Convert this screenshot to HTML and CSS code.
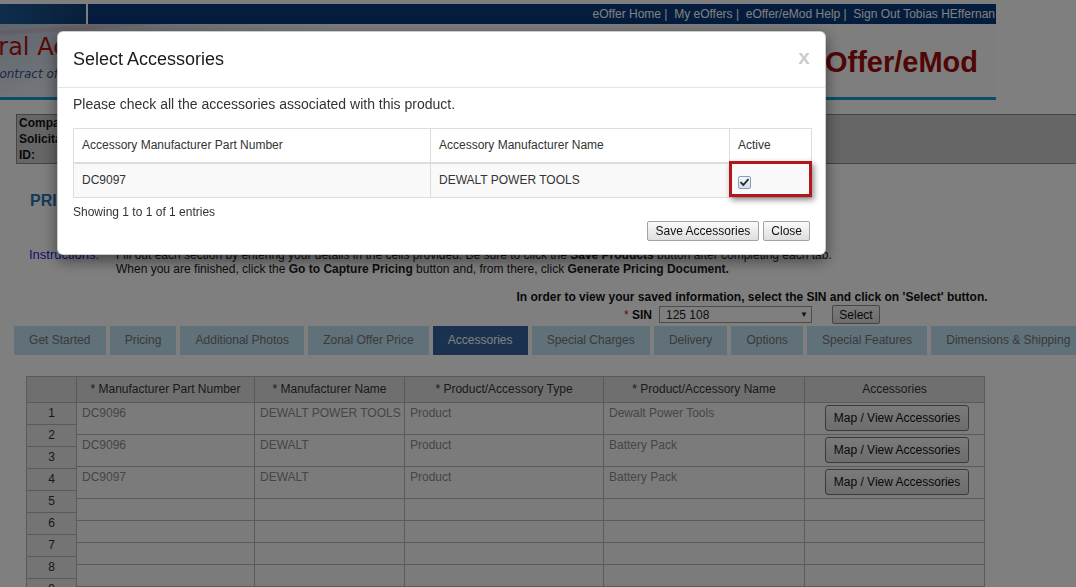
FILE: index.html
```html
<!DOCTYPE html>
<html lang="en">
<head>
<meta charset="utf-8">
<title>eOffer/eMod - Accessories</title>
<link rel="stylesheet" href="styles.css">
</head>
<body>
<div class="page">
  <div class="topbar">
    <div class="topbar-left"></div>
    <div class="topbar-links">eOffer Home |&nbsp; My eOffers |&nbsp; eOffer/eMod Help |&nbsp; Sign Out Tobias HEffernan</div>
  </div>
  <div class="masthead">
    <div class="brand">
      <div class="brand-name">Federal Acquisition Service</div>
      <div class="brand-tag">Contract offer and modification</div>
    </div>
    <div class="app-name">eOffer/eMod</div>
  </div>

  <div class="infobar">
    <div class="info-labels">Company:<br>Solicitation<br>ID:</div>
  </div>

  <h1 class="section-title">PRICING</h1>

  <div class="instructions">
    <div class="instr-label">Instructions:</div>
    <div class="instr-text">Fill out each section by entering your details in the cells provided. Be sure to click the <b>Save Products</b> button after completing each tab.<br>When you are finished, click the <b>Go to Capture Pricing</b> button and, from there, click <b>Generate Pricing Document.</b></div>
  </div>

  <div class="sin-wrap">
    <div class="sin-panel">
      <div class="sin-note">In order to view your saved information, select the SIN and click on 'Select' button.</div>
      <div class="sin-row">
        <span class="sin-label"><span class="req">*</span> SIN</span>
        <span class="sin-select"><span>125 108</span><span class="sin-arrow">&#9660;</span></span>
        <button class="sin-btn">Select</button>
      </div>
    </div>
  </div>

  <div class="tabs">
    <div class="tab">Get Started</div>
    <div class="tab">Pricing</div>
    <div class="tab">Additional Photos</div>
    <div class="tab">Zonal Offer Price</div>
    <div class="tab active">Accessories</div>
    <div class="tab">Special Charges</div>
    <div class="tab">Delivery</div>
    <div class="tab">Options</div>
    <div class="tab">Special Features</div>
    <div class="tab">Dimensions &amp; Shipping</div>
  </div>

  <div class="grid">
    <div class="rownums">
      <div class="rn rn-head"></div>
      <div class="rn">1</div>
      <div class="rn">2</div>
      <div class="rn">3</div>
      <div class="rn">4</div>
      <div class="rn">5</div>
      <div class="rn">6</div>
      <div class="rn">7</div>
      <div class="rn">8</div>
      <div class="rn">9</div>
      <div class="rn">10</div>
    </div>
    <div class="data">
      <div class="drow dhead">
        <div class="c c1">* Manufacturer Part Number</div>
        <div class="c c2">* Manufacturer Name</div>
        <div class="c c3">* Product/Accessory Type</div>
        <div class="c c4">* Product/Accessory Name</div>
        <div class="c c5">Accessories</div>
      </div>
      <div class="drow tall">
        <div class="c c1">DC9096</div>
        <div class="c c2">DEWALT POWER TOOLS</div>
        <div class="c c3">Product</div>
        <div class="c c4">Dewalt Power Tools</div>
        <div class="c c5 btn-cell"><button class="map-btn">Map / View Accessories</button></div>
      </div>
      <div class="drow tall">
        <div class="c c1">DC9096</div>
        <div class="c c2">DEWALT</div>
        <div class="c c3">Product</div>
        <div class="c c4">Battery Pack</div>
        <div class="c c5 btn-cell"><button class="map-btn">Map / View Accessories</button></div>
      </div>
      <div class="drow tall">
        <div class="c c1">DC9097</div>
        <div class="c c2">DEWALT</div>
        <div class="c c3">Product</div>
        <div class="c c4">Battery Pack</div>
        <div class="c c5 btn-cell"><button class="map-btn">Map / View Accessories</button></div>
      </div>
      <div class="drow"><div class="c c1"></div><div class="c c2"></div><div class="c c3"></div><div class="c c4"></div><div class="c c5"></div></div>
      <div class="drow"><div class="c c1"></div><div class="c c2"></div><div class="c c3"></div><div class="c c4"></div><div class="c c5"></div></div>
      <div class="drow"><div class="c c1"></div><div class="c c2"></div><div class="c c3"></div><div class="c c4"></div><div class="c c5"></div></div>
      <div class="drow"><div class="c c1"></div><div class="c c2"></div><div class="c c3"></div><div class="c c4"></div><div class="c c5"></div></div>
      <div class="drow"><div class="c c1"></div><div class="c c2"></div><div class="c c3"></div><div class="c c4"></div><div class="c c5"></div></div>
    </div>
  </div>
</div>

<div class="backdrop"></div>

<div class="modal">
  <div class="modal-header">
    <h4 class="modal-title">Select Accessories</h4>
    <span class="modal-close">x</span>
  </div>
  <div class="modal-body">
    <p class="modal-intro">Please check all the accessories associated with this product.</p>
    <div class="acc-wrap">
      <table class="acc-table">
        <colgroup><col class="w1"><col class="w2"><col class="w3"></colgroup>
        <thead>
          <tr><th>Accessory Manufacturer Part Number</th><th>Accessory Manufacturer Name</th><th>Active</th></tr>
        </thead>
        <tbody>
          <tr>
            <td>DC9097</td>
            <td>DEWALT POWER TOOLS</td>
            <td><span class="check"><svg width="11" height="11" viewBox="0 0 11 11"><path d="M2 5.6 L4.4 8 L9 2.6" fill="none" stroke="#2e2e2e" stroke-width="1.9" stroke-linecap="round" stroke-linejoin="round"/></svg></span></td>
          </tr>
        </tbody>
      </table>
      <div class="highlight"></div>
    </div>
    <div class="table-info">Showing 1 to 1 of 1 entries</div>
    <div class="modal-actions">
      <button class="mbtn mbtn-save">Save Accessories</button>
      <button class="mbtn">Close</button>
    </div>
  </div>
</div>
</body>
</html>
```

FILE: styles.css
```css
* { box-sizing: border-box; }
html, body { margin: 0; }
body {
  width: 1076px;
  height: 587px;
  overflow: hidden;
  background: #fff;
  font-family: "Liberation Sans", Arial, sans-serif;
  font-size: 12px;
  color: #222;
}
button { font-family: "Liberation Sans", Arial, sans-serif; }

.page { width: 1120px; padding-top: 4px; }

/* top bar */
.topbar { display: flex; width: 996px; height: 20px; }
.topbar-left {
  width: 86px;
  margin-right: 2px;
  background: linear-gradient(90deg, #1d5b98, #123f76);
}
.topbar-links {
  flex: 1;
  background: #08387a;
  color: #fff;
  text-align: right;
  line-height: 20px;
  font-size: 12px;
  padding-right: 1px;
  white-space: nowrap;
}

/* masthead */
.masthead {
  width: 996px;
  height: 76px;
  border-bottom: 3px solid #169ccc;
  display: flex;
  justify-content: space-between;
  overflow: hidden;
  background:
    linear-gradient(176deg, rgba(255,255,255,0) 0 6px, rgba(210,110,110,0.18) 7px 11px, rgba(255,255,255,0) 12px),
    linear-gradient(160deg, rgba(140,165,200,0.55) 0, rgba(255,255,255,0) 30%),
    #fdfdfd;
}
.brand { padding-top: 9px; }
.brand-name {
  font-family: "DejaVu Sans", Verdana, sans-serif;
  font-size: 24px;
  line-height: 28px;
  color: #b31212;
  margin-left: -59px;
  white-space: nowrap;
}
.brand-tag {
  font-family: "DejaVu Sans", Verdana, sans-serif;
  font-style: italic;
  font-size: 12px;
  line-height: 14px;
  color: #36538c;
  margin: 6px 0 0 -9px;
  white-space: nowrap;
}
.app-name {
  font-size: 29px;
  font-weight: bold;
  line-height: 34px;
  color: #a00c0c;
  padding: 21px 18px 0 0;
}

/* info bar */
.infobar {
  margin: 14px 0 0 16px;
  width: 1080px;
  height: 50px;
  border: 1px solid #8a8a8a;
  background: #cdcdcd;
}
.info-labels {
  width: 80px;
  padding-left: 2px;
  font-weight: bold;
  font-size: 12px;
  line-height: 16px;
  color: #111;
}

.section-title {
  margin: 27px 0 0 30px;
  font-size: 16px;
  line-height: 20px;
  font-weight: bold;
  color: #2b72b4;
}

/* instructions */
.instructions { display: flex; margin: 37px 0 0 29px; }
.instr-label { width: 87px; flex: none; font-size: 13px; line-height: 14px; color: #2222e0; }
.instr-text { font-size: 12px; line-height: 14px; color: #1a1a1a; white-space: nowrap; }

/* SIN selector */
.sin-wrap { width: 985px; display: flex; justify-content: flex-end; margin-top: 14px; }
.sin-panel { width: 466px; display: flex; flex-direction: column; align-items: center; }
.sin-note { font-weight: bold; font-size: 12px; line-height: 14px; white-space: nowrap; color: #111; }
.sin-row { display: flex; align-items: center; height: 19px; margin-top: 1px; }
.sin-label { font-weight: bold; font-size: 12px; margin-right: 7px; color: #111; }
.sin-label .req { color: #cc1111; font-weight: normal; }
.sin-select {
  width: 153px;
  height: 17px;
  border: 1px solid #9a9a9a;
  background: #fff;
  display: flex;
  align-items: center;
  justify-content: space-between;
  padding: 0 3px 0 6px;
  font-size: 12px;
  color: #222;
}
.sin-arrow { font-size: 8px; color: #222; }
.sin-btn {
  margin-left: 20px;
  width: 48px;
  height: 19px;
  padding: 0;
  border: 1px solid #8a8a8a;
  border-radius: 2px;
  background: linear-gradient(#f6f6f6, #dcdcdc);
  font-size: 12px;
  color: #111;
}

/* tabs */
.tabs { display: flex; gap: 4px; margin: 2px 0 0 14px; height: 29px; }
.tab {
  padding: 0 15.1px;
  line-height: 29px;
  background: #c0e2f4;
  color: #747474;
  font-size: 12px;
  white-space: nowrap;
}
.tab.active { background: #35639f; color: #fff; }

/* product grid */
.grid {
  display: flex;
  align-items: flex-start;
  margin: 21px 0 0 26px;
  border-top: 1px solid #b5b5b5;
  border-left: 1px solid #b5b5b5;
  width: max-content;
}
.rownums { width: 50px; }
.rn {
  height: 22px;
  border-right: 1px solid #b5b5b5;
  border-bottom: 1px solid #b5b5b5;
  background: #e8e8e8;
  text-align: center;
  line-height: 21px;
  font-size: 12px;
  color: #333;
}
.rn.rn-head { height: 26px; background: #dedede; }

.drow { display: flex; height: 22px; }
.drow.dhead { height: 26px; }
.drow.tall { height: 32px; }
.c {
  border-right: 1px solid #b5b5b5;
  border-bottom: 1px solid #b5b5b5;
  background: #f6f6f6;
  padding: 3px 5px 0;
  line-height: 14px;
  font-size: 12px;
  color: #8c8c8c;
  white-space: nowrap;
  overflow: hidden;
}
.c1 { width: 178px; }
.c2 { width: 150px; }
.c3 { width: 199px; }
.c4 { width: 201px; }
.c5 { width: 180px; }
.dhead .c {
  background: #dedede;
  color: #353535;
  text-align: center;
  padding: 0;
  line-height: 25px;
}
.btn-cell { display: flex; align-items: center; justify-content: center; padding: 0 0 1px 5px; }
.map-btn {
  width: 144px;
  height: 26px;
  padding: 0;
  border: 1px solid #777;
  border-radius: 3px;
  background: linear-gradient(#f5f5f5, #dadada);
  font-size: 12px;
  color: #111;
}

/* modal */
.backdrop {
  position: fixed;
  inset: 0;
  background: rgba(0, 0, 0, 0.5);
  z-index: 10;
}
.modal {
  position: fixed;
  left: 57px;
  top: 31px;
  width: 769px;
  background: #fff;
  border: 1px solid rgba(0, 0, 0, 0.2);
  border-radius: 6px;
  box-shadow: 0 5px 15px rgba(0, 0, 0, 0.5);
  z-index: 20;
  color: #333;
}
.modal-header {
  display: flex;
  justify-content: space-between;
  align-items: flex-start;
  padding: 15px;
  border-bottom: 1px solid #e5e5e5;
}
.modal-title {
  margin: 0;
  font-size: 18px;
  font-weight: normal;
  line-height: 25px;
  color: #1a1a1a;
}
.modal-close {
  font-size: 21px;
  font-weight: bold;
  line-height: 21px;
  color: #cccccc;
  margin-top: -1px;
  margin-right: 0;
}
.modal-body { padding: 6px 15px 13px; }
.modal-intro { margin: 0 0 14px; font-size: 14px; line-height: 20px; color: #333; }

.acc-wrap { position: relative; }
.acc-table {
  width: 738px;
  table-layout: fixed;
  border-collapse: collapse;
  border: 1px solid #dddddd;
  font-size: 12px;
}
.acc-table col.w1 { width: 357px; }
.acc-table col.w2 { width: 299px; }
.acc-table col.w3 { width: 82px; }
.acc-table th,
.acc-table td {
  padding: 8px;
  line-height: 17px;
  text-align: left;
  border: 1px solid #dddddd;
  color: #333;
}
.acc-table th {
  font-weight: normal;
  border-bottom: 2px solid #dddddd;
  background: #fff;
}
.acc-table tbody tr { background: #f9f9f9; }
.check {
  display: inline-flex;
  align-items: center;
  justify-content: center;
  width: 13px;
  height: 13px;
  margin-top: 4px;
  vertical-align: top;
  border: 1px solid #7f9fcf;
  border-radius: 2px;
  background: linear-gradient(#f4f6f8, #dadde2);
}
.check svg { display: block; }
.highlight {
  position: absolute;
  left: 656px;
  top: 33px;
  width: 83px;
  height: 36px;
  border: 3px solid #b3161c;
  box-shadow: 2px 3px 6px rgba(0, 0, 0, 0.45);
}

.table-info { margin-top: 6px; font-size: 12px; line-height: 16px; color: #333; }
.modal-actions { display: flex; justify-content: flex-end; gap: 4px; margin-top: 1px; }
.mbtn {
  height: 20px;
  padding: 0 7px;
  border: 1px solid #a3a3a3;
  border-radius: 2px;
  background: linear-gradient(#fafafa, #dedede);
  font-size: 12px;
  color: #111;
}
.mbtn-save { padding: 0 8px; }
```
